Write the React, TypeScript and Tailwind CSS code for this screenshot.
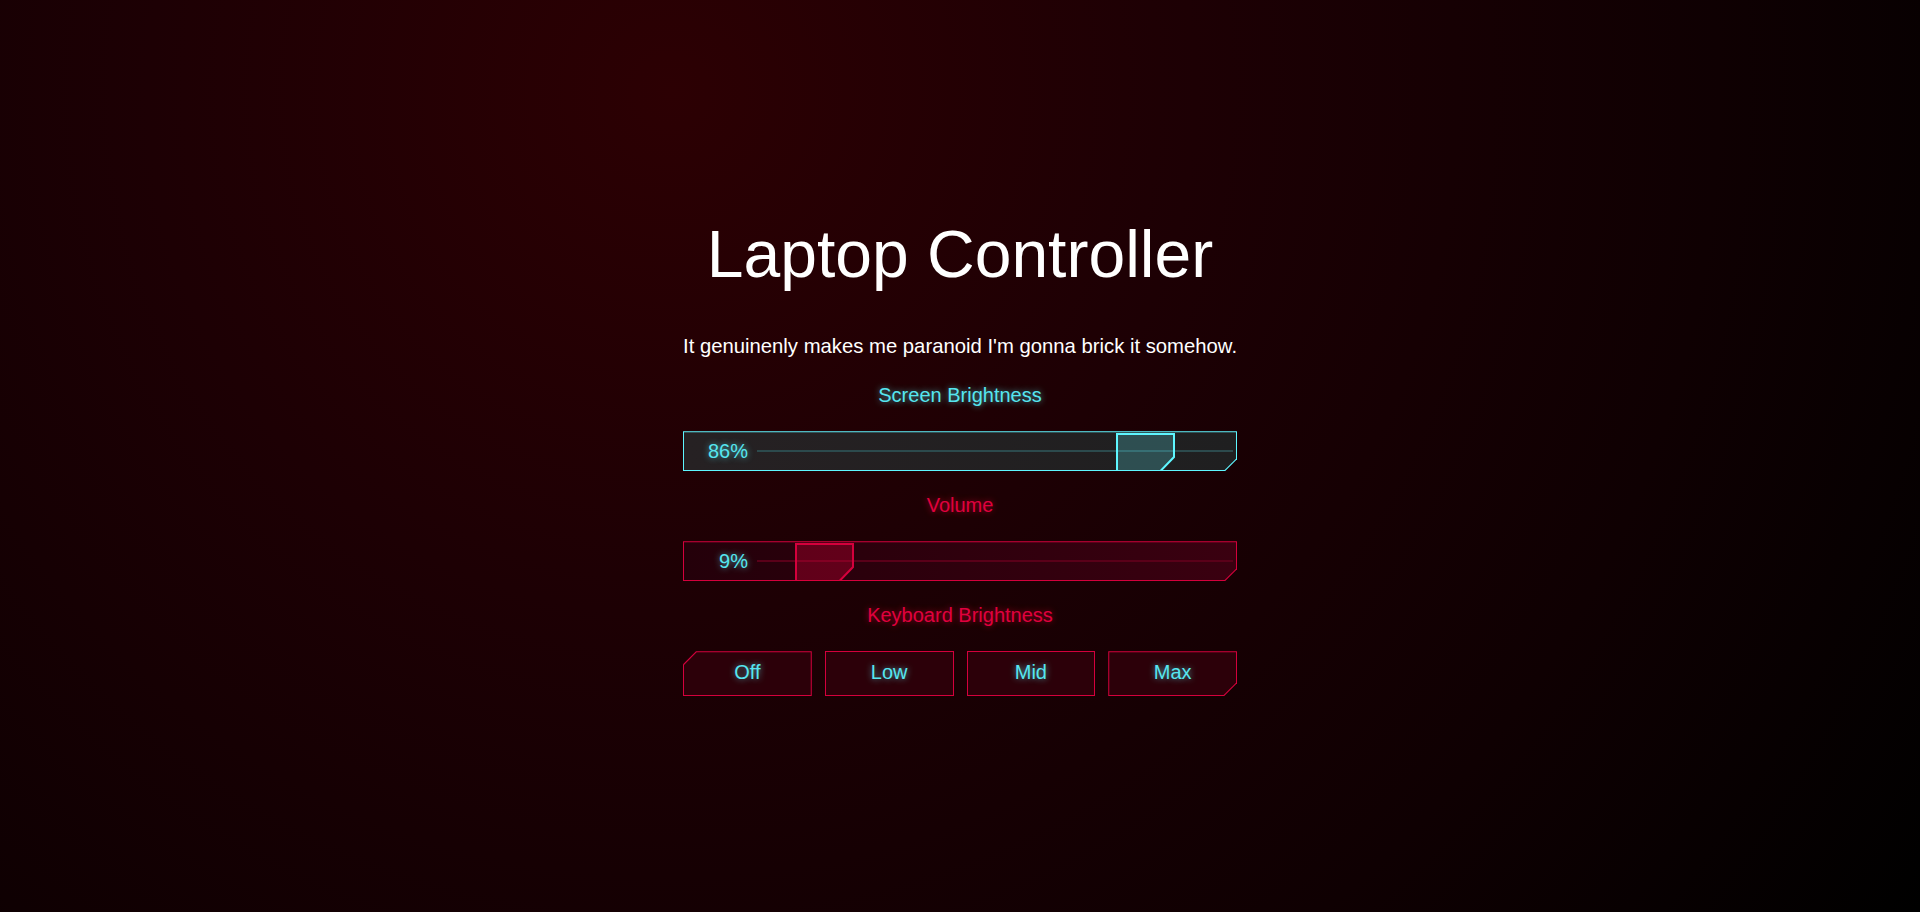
import { useState } from 'react';

const CYAN = '#5ef6ff';

const FONT = "font-['Liberation_Sans',Arial,sans-serif]";
const CYAN_GLOW = 'text-[#56e6f0] [text-shadow:0_0_6px_rgba(94,246,255,0.65)]';
const RED_GLOW = 'text-[#e0003e] [text-shadow:0_0_6px_rgba(255,0,60,0.55)]';

const LEVELS = ['Off', 'Low', 'Mid', 'Max'];

function Thumb({ stroke, fill }: { stroke: string; fill: string }) {
  return (
    <svg width="59" height="38" viewBox="0 0 59 38" className="block">
      <polygon points="0,0 59,0 59,24 45,38 0,38" fill={fill} />
      <polyline points="1,38 1,1 58,1 58,24 44.5,38" fill="none" stroke={stroke} strokeWidth="2" />
    </svg>
  );
}

function Slider({
  value,
  variant,
}: {
  value: number;
  variant: 'cyan' | 'red';
}) {
  const cyan = variant === 'cyan';
  return (
    <div
      className={`relative h-[40px] w-full ${
        cyan ? 'bg-[#5ef6ff]' : 'bg-[#d4003c]'
      } [clip-path:polygon(0_0,100%_0,100%_calc(100%_-_12px),calc(100%_-_12px)_100%,0_100%)]`}
    >
      {/* body */}
      <div
        className={`absolute inset-px bg-gradient-to-r ${
          cyan ? 'from-[#262123] to-[#1f1f20]' : 'from-[#24000a] to-[#3a0010]'
        } [clip-path:polygon(0_0,100%_0,100%_calc(100%_-_11.6px),calc(100%_-_11.6px)_100%,0_100%)]`}
      />
      <div className="absolute inset-0 flex">
        <div className={`flex w-[65px] items-center justify-end text-[20px] leading-none ${CYAN_GLOW}`}>
          {value}%
        </div>
        <div className="relative ml-[9px] mr-[4px] h-full flex-1">
          <div
            className={`absolute inset-x-0 top-[19px] h-[2px] ${
              cyan ? 'bg-[#2c4a4d]' : 'bg-[#5a0019]'
            }`}
          />
          <div
            className="absolute top-[2px]"
            style={{ left: `calc((100% - 59px) * ${value / 100})` }}
          >
            <Thumb
              stroke={cyan ? CYAN : '#d4003c'}
              fill={cyan ? 'rgba(94,246,255,0.22)' : 'rgba(230,0,60,0.3)'}
            />
          </div>
        </div>
      </div>
    </div>
  );
}

function LevelButton({ label, index }: { label: string; index: number }) {
  const outerClip =
    index === 0
      ? '[clip-path:polygon(13px_0,100%_0,100%_100%,0_100%,0_13px)]'
      : index === 3
        ? '[clip-path:polygon(0_0,100%_0,100%_calc(100%_-_13px),calc(100%_-_13px)_100%,0_100%)]'
        : '';
  const innerClip =
    index === 0
      ? '[clip-path:polygon(12.6px_0,100%_0,100%_100%,0_100%,0_12.6px)]'
      : index === 3
        ? '[clip-path:polygon(0_0,100%_0,100%_calc(100%_-_12.6px),calc(100%_-_12.6px)_100%,0_100%)]'
        : '';
  return (
    <button className={`relative h-[45px] bg-[#d4003c] ${outerClip}`}>
      <span className={`absolute inset-px bg-[#2c0009] ${innerClip}`} />
      <span className={`relative text-[20px] leading-none ${CYAN_GLOW}`}>{label}</span>
    </button>
  );
}

export default function App() {
  const [level] = useState(0);

  return (
    <div
      className={`min-h-screen w-full bg-[radial-gradient(circle_at_35%_10%,#2c0003_0%,#1d0004_35%,#0f0002_70%,#000_100%)] ${FONT}`}
    >
      <div className="mx-auto flex w-[554px] flex-col items-center pt-[221px] pb-[200px]">
        <h1 className="text-[66px] font-light leading-none text-white">Laptop Controller</h1>
        <p className="mt-[49px] whitespace-nowrap text-[20.3px] leading-none text-white">
          It genuinenly makes me paranoid I'm gonna brick it somehow.
        </p>

        <div className={`mt-[29px] mb-[26px] text-[20px] leading-none ${CYAN_GLOW}`}>
          Screen Brightness
        </div>
        <Slider value={86} variant="cyan" />

        <div className={`mt-[24px] mb-[26px] text-[20px] leading-none ${RED_GLOW}`}>Volume</div>
        <Slider value={9} variant="red" />

        <div className={`mt-[24px] mb-[26px] text-[20px] leading-none ${RED_GLOW}`}>
          Keyboard Brightness
        </div>
        <div className="grid w-full grid-cols-4 gap-[13px]" data-level={level}>
          {LEVELS.map((l, i) => (
            <LevelButton key={l} label={l} index={i} />
          ))}
        </div>
      </div>
    </div>
  );
}
